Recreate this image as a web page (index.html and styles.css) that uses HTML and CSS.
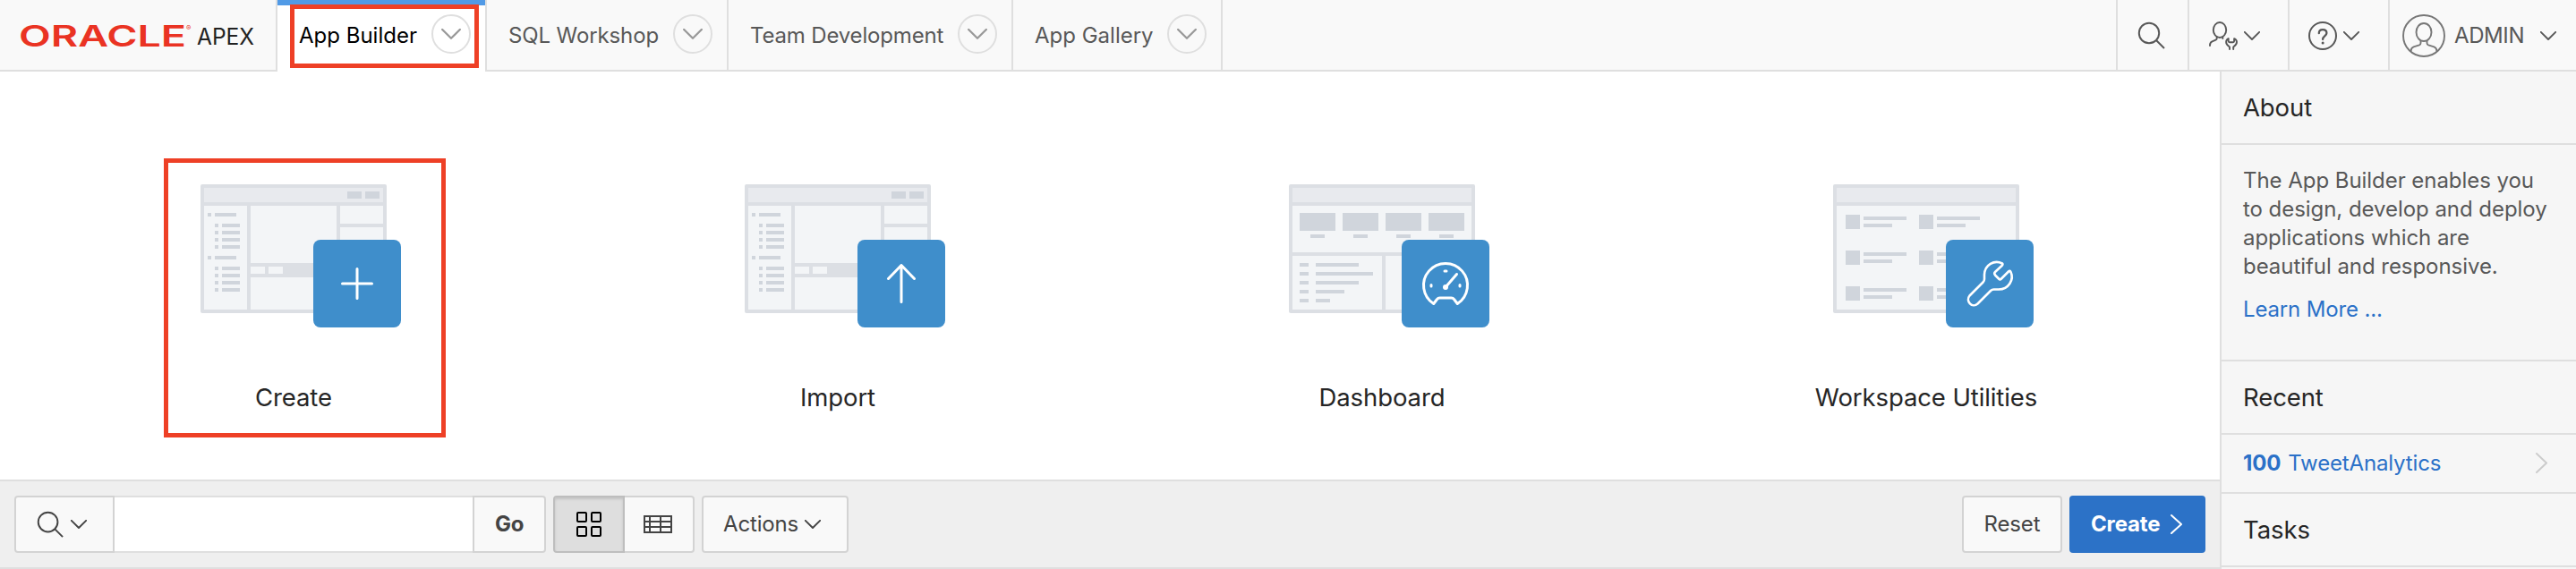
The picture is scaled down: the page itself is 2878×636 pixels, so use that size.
FILE: index.html
```html
<!DOCTYPE html>
<html lang="en">
<head>
<meta charset="utf-8">
<title>Oracle APEX</title>
<link rel="stylesheet" href="styles.css">
</head>
<body>
<svg class="defs" width="0" height="0">
  <symbol id="chev" viewBox="0 0 18 10"><path d="M.8.8 9 9 17.200.8" fill="none" stroke="currentColor" stroke-width="1.9" stroke-linecap="round" stroke-linejoin="round"/></symbol>
  <symbol id="search" viewBox="0 0 32 32"><circle cx="13" cy="13" r="11.200" fill="none" stroke="currentColor" stroke-width="2"/><path d="M21 21l9 9" fill="none" stroke="currentColor" stroke-width="2"/></symbol>
  <symbol id="page" viewBox="0 0 208 144">
    <rect width="208" height="144" rx="2" fill="#dcdfe4"/>
    <path fill="#e8eaee" d="M4 4h200v16H4z"/>
    <path fill="#d0d5dc" d="M164 8h16v8h-16zM184 8h16v8h-16z"/>
    <path fill="#f3f5f7" d="M4 24h48v116H4zM56 24h96v64H56zM156 24h48v20h-48zM156 48h48v92h-48zM56 104h96v36H56zM56 92h16v8H56zM76 92h16v8H76z"/>
    <path fill="#d0d5dc" d="M8 32h4v4H8zM16 32h24v4H16zM16 44h4v4h-4zM24 44h20v4H24zM16 52h4v4h-4zM24 52h20v4H24zM16 60h4v4h-4zM24 60h20v4H24zM16 68h4v4h-4zM24 68h20v4H24zM8 80h4v4H8zM16 80h24v4H16zM16 92h4v4h-4zM24 92h20v4H24zM16 100h4v4h-4zM24 100h20v4H24zM16 108h4v4h-4zM24 108h20v4H24zM16 116h4v4h-4zM24 116h20v4H24z"/>
  </symbol>
</svg>

<header class="header">
  <a class="brand">
    <svg class="logo" width="270" height="40" viewBox="0 0 270 40">
      <text class="oracle" x="-2" y="32" textLength="187" lengthAdjust="spacingAndGlyphs">ORACLE</text>
      <text class="reg" x="185" y="14">®</text>
      <text class="apex" x="197" y="30" textLength="64" lengthAdjust="spacingAndGlyphs">APEX</text>
    </svg>
  </a>
  <nav class="tabs">
    <div class="tab active"><span class="label app">App Builder</span><span class="ring"><svg width="22" height="12"><use href="#chev"/></svg></span><i class="mark mark-tab"></i></div>
    <div class="tab"><span class="label sql">SQL Workshop</span><span class="ring"><svg width="22" height="12"><use href="#chev"/></svg></span></div>
    <div class="tab"><span class="label team">Team Development</span><span class="ring"><svg width="22" height="12"><use href="#chev"/></svg></span></div>
    <div class="tab"><span class="label gallery">App Gallery</span><span class="ring"><svg width="22" height="12"><use href="#chev"/></svg></span></div>
  </nav>
  <div class="tools">
    <div class="tool t-search"><svg width="32" height="32"><use href="#search"/></svg></div>
    <div class="tool t-admin">
      <svg width="32" height="32" viewBox="0 0 32 32" fill="none" stroke="currentColor" stroke-width="1.900" stroke-linecap="round" stroke-linejoin="round"><ellipse cx="12" cy="9.500" rx="7.200" ry="8.500"/><path d="M8.700 17.200v1.800c0 .8-.4 1.300-1.200 1.600l-4 1.700C1.800 23 1 24.500 1 26.500V27M15.300 17.200V19"/><path d="M23 31v-2.500c-2.500-1.500-3.900-3.300-3.900-5.400 0-1.700 1-3.300 2.600-4v3c0 .7.5 1.200 1.200 1.200h4c.7 0 1.200-.5 1.200-1.200v-3c1.600.7 2.900 2.300 2.900 4 0 2.100-1.600 3.900-3.800 5.400V31"/></svg>
      <svg width="18" height="10"><use href="#chev"/></svg>
    </div>
    <div class="tool t-help">
      <svg width="32" height="32" viewBox="0 0 32 32" fill="none" stroke="currentColor" stroke-width="2" stroke-linecap="round"><circle cx="16" cy="16" r="15"/><path d="M11.800 13.200c0-2.500 1.800-4 4.300-4s4.300 1.500 4.300 3.800c0 3.100-4.300 3.200-4.300 7" stroke-width="2.300"/><circle cx="16.100" cy="24" r="1.500" fill="currentColor" stroke="none"/></svg>
      <svg width="18" height="10"><use href="#chev"/></svg>
    </div>
    <div class="tool t-user">
      <svg class="avatar" width="48" height="48" viewBox="0 0 48 48" fill="none" stroke="currentColor" stroke-width="1.900"><circle cx="24" cy="24" r="23"/><ellipse cx="24" cy="20" rx="8.500" ry="10"/><path d="M20.500 29.500V32c0 1.200-.5 2-1.600 2.400l-6.300 2C10.400 37.200 9.500 38.500 9.500 41.500M27.500 29.500V32c0 1.200.5 2 1.600 2.400l6.300 2c2.200.8 3.100 2.100 3.100 5.100"/></svg>
      <span class="label admin">ADMIN</span>
      <svg width="18" height="10"><use href="#chev"/></svg>
    </div>
  </div>
</header>

<div class="body">
  <main class="main">
    <div class="cards">
      <a class="card">
        <span class="art"><svg width="208" height="144"><use href="#page"/></svg>
          <span class="badge"><svg width="98" height="98" viewBox="0 0 98 98"><path d="M49 32.500v33M32.500 49h33"/></svg></span></span>
        <span class="title">Create</span>
        <i class="mark mark-card"></i>
      </a>
      <a class="card">
        <span class="art"><svg width="208" height="144"><use href="#page"/></svg>
          <span class="badge"><svg width="98" height="98" viewBox="0 0 98 98"><path d="M49 69.500v-41M34.500 43.500 49 28.500l14.500 15"/></svg></span></span>
        <span class="title">Import</span>
      </a>
      <a class="card">
        <span class="art"><svg width="208" height="144" viewBox="0 0 208 144">
          <rect width="208" height="144" rx="2" fill="#dcdfe4"/>
          <path fill="#e8eaee" d="M4 4h200v16H4z"/>
          <path fill="#f3f5f7" d="M4 24h200v52H4zM4 80h100v60H4zM108 80h96v60h-96z"/>
          <path fill="#d0d5dc" d="M12 32h40v20H12zM60 32h40v20H60zM108 32h40v20h-40zM156 32h40v20h-40zM24 56h16v4H24zM72 56h16v4H72zM120 56h16v4h-16zM168 56h16v4h-16zM12 88h10v4H12zM12 98h10v4H12zM12 108h10v4H12zM12 118h10v4H12zM12 128h10v4H12zM30 88h48v4H30zM30 98h64v4H30zM30 108h48v4H30zM30 118h32v4H30zM30 128h16v4H30z"/></svg>
          <span class="badge"><svg width="98" height="98" viewBox="0 0 98 98"><path d="M35.700 71.500A24.500 24.500 0 1 1 62.300 71.500L58.500 66.500Q57.500 65 55.500 65h-13Q40.500 65 39.500 66.500ZM49 53 61.500 38.500"/><circle cx="49" cy="53" r="3" class="solid"/><path d="M48 35h2M33 50.500v1.500M65 50.500v1.500"/></svg></span></span>
        <span class="title">Dashboard</span>
      </a>
      <a class="card">
        <span class="art"><svg width="208" height="144" viewBox="0 0 208 144">
          <rect width="208" height="144" rx="2" fill="#dcdfe4"/>
          <path fill="#e8eaee" d="M4 4h200v16H4z"/>
          <path fill="#f3f5f7" d="M4 24h200v116H4z"/>
          <path fill="#d0d5dc" d="M14 34h16v16H14zM34 36h48v4H34zM34 44h32v4H34zM14 74h16v16H14zM34 76h48v4H34zM34 84h32v4H34zM14 114h16v16H14zM34 116h48v4H34zM34 124h32v4H34zM96 34h16v16H96zM116 36h48v4h-48zM116 44h32v4h-32zM96 74h16v16H96zM116 76h48v4h-48zM116 84h32v4h-32zM96 114h16v16H96zM116 116h48v4h-48zM116 124h32v4h-32z"/></svg>
          <span class="badge"><svg width="98" height="98" viewBox="0 0 98 98"><path d="M63 26.500C54 22 43.500 28 43 39v5Q43 46 41.500 47.500L26.500 62.500C21.500 68.500 29.500 77 35.500 71.500L50 57Q51.500 55.500 53.500 55.500H59C70 55.500 76.500 44.500 72.500 36Q71.500 34 70 35.500L62 43.500Q60.500 45 59 43.500L55 39.500Q53.500 37.500 55 36L62.500 29Q64 27.500 63 26.500Z" stroke-width="2.600"/></svg></span></span>
        <span class="title">Workspace Utilities</span>
      </a>
    </div>

    <div class="toolbar">
      <div class="group">
        <button class="btn b-search"><svg width="31" height="31"><use href="#search"/></svg><svg width="18" height="10"><use href="#chev"/></svg></button>
        <input class="field" type="text" aria-label="Search">
        <button class="btn b-go">Go</button>
      </div>
      <div class="group">
        <button class="btn b-grid"><svg width="28" height="28" viewBox="0 0 28 28" fill="none" stroke="currentColor" stroke-width="2"><rect x="1" y="1" width="10" height="10" rx="1"/><rect x="17" y="1" width="10" height="10" rx="1"/><rect x="1" y="17" width="10" height="10" rx="1"/><rect x="17" y="17" width="10" height="10" rx="1"/></svg></button>
        <button class="btn b-table"><svg width="32" height="20" viewBox="0 0 32 20" fill="none" stroke="currentColor" stroke-width="2"><path d="M1 1h30v18H1zM1 7h30M1 13h30M7 1v18M19 1v18"/></svg></button>
      </div>
      <button class="btn b-actions">Actions<svg width="18" height="10"><use href="#chev"/></svg></button>
      <span class="spacer"></span>
      <button class="btn b-reset">Reset</button>
      <button class="btn b-create">Create<svg width="13" height="22" viewBox="0 0 13 22"><path d="M1 1l11 10L1 21" fill="none" stroke="currentColor" stroke-width="2" stroke-linecap="round" stroke-linejoin="round"/></svg></button>
    </div>
  </main>

  <aside class="side">
    <h2>About</h2>
    <div class="about">
      <p>The App Builder enables you<br>to design, develop and deploy<br>applications which are<br>beautiful and responsive.</p>
      <a class="more">Learn More ...</a>
    </div>
    <h2>Recent</h2>
    <a class="recent"><b>100</b> <span>TweetAnalytics</span><svg width="13" height="23" viewBox="0 0 13 23"><path d="M1 1l11 10.500L1 22" fill="none" stroke="#ccc" stroke-width="2" stroke-linecap="round"/></svg></a>
    <h2>Tasks</h2>
  </aside>
</div>
</body>
</html>
```

FILE: styles.css
```css
* { box-sizing: border-box; }
body { margin: 0; width: 2878px; height: 636px; overflow: hidden; background: #fff; font-family: Inter, "Liberation Sans", sans-serif; font-size: 24px; color: #585858; }
svg { display: block; flex: none; }
.defs { position: absolute; }

.header { display: flex; height: 80px; background: #f9f9f9; border-bottom: 2px solid #dfdfdf; }
.brand { width: 308px; padding: 20px 0 0 23px; }
.logo { overflow: visible; }
.oracle { font: 600 33px Inter, sans-serif; fill: #ea3323; }
.reg { font: 8px Inter, sans-serif; fill: #ea3323; }
.apex { font: 400 25px Inter, sans-serif; fill: #222; }

.tabs { display: flex; height: 80px; }
.tab { position: relative; display: flex; height: 78px; border-right: 2px solid #dfdfdf; padding: 0 16px 0 24px; gap: 16px; }
.tab:first-child { border-left: 2px solid #dfdfdf; }
.label { line-height: 80px; white-space: nowrap; }
.tab.active { height: 80px; background: #fff; color: #000; box-shadow: inset 0 6px #519ae6; }
.app, .gallery { width: 132px; }
.sql { width: 168px; letter-spacing: -.12px; }
.team { width: 216px; letter-spacing: -.17px; }
.ring { display: grid; place-items: center; width: 44px; height: 44px; margin-top: 16px; border: 2px solid #dfdfdf; border-radius: 50%; color: #999; }
.mark { position: absolute; border: 5px solid #ee4026; pointer-events: none; }
.mark-tab { left: 14px; top: 5px; width: 211px; height: 71px; }

.tools { display: flex; margin-left: auto; }
.tool { display: flex; align-items: center; height: 78px; border-left: 2px solid #dfdfdf; padding-top: 2px; }
.t-search { width: 80px; padding-left: 22px; }
.t-admin { width: 112px; padding-left: 22px; gap: 7px; }
.t-help { width: 112px; padding-left: 21px; gap: 7px; }
.t-user { width: 210px; padding-left: 14px; }
.avatar { color: #777; }
.admin { width: 78px; margin: -1px 18px 0 10px; letter-spacing: -.4px; }

.body { display: flex; height: 556px; }
.main { width: 2480px; display: flex; flex-direction: column; }
.cards { display: flex; height: 456px; padding: 0 24px; }
.card { position: relative; width: 608px; display: flex; flex-direction: column; align-items: center; padding-top: 126px; }
.art { position: relative; width: 208px; height: 160px; }
.badge { position: absolute; left: 126px; top: 62px; width: 98px; height: 98px; border-radius: 8px; background: #3f8ecb; }
.badge svg { fill: none; stroke: #fff; stroke-width: 3; stroke-linecap: round; stroke-linejoin: round; }
.badge .solid { fill: #fff; stroke: none; }
.title { margin-top: 58px; line-height: 40px; font-size: 27.5px; letter-spacing: -.1px; color: #262626; white-space: nowrap; }
.mark-card { left: 159px; top: 97px; width: 315px; height: 312px; }

.toolbar { display: flex; align-items: center; gap: 8px; height: 100px; padding: 0 16px; background: #efefef; border-top: 2px solid #dfdfdf; border-bottom: 2px solid #dfdfdf; }
.group { display: flex; }
.btn { display: flex; align-items: center; justify-content: center; height: 64px; margin: 0; padding: 0 0 1px; border: 2px solid #d3d3d3; border-radius: 4px; background: #f9f9f9; color: #444; font: 24px Inter, "Liberation Sans", sans-serif; letter-spacing: -.15px; }
.b-search { width: 112px; justify-content: flex-start; padding: 0 0 0 23px; gap: 7px; border-radius: 4px 0 0 4px; }
.field { width: 400px; height: 64px; border: solid #dfdfdf; border-width: 2px 0; background: #fff; outline: 0; }
.b-go { width: 82px; border-radius: 0 4px 4px 0; font-weight: 700; letter-spacing: -.4px; }
.b-grid { width: 80px; padding: 0; border-color: #bebebe; border-radius: 4px 0 0 4px; background: #dedede; color: #000; box-shadow: inset 0 2px 3px rgba(0, 0, 0, .12); }
.b-table { width: 78px; padding: 0 2px 0 0; border-left: 0; border-radius: 0 4px 4px 0; }
.b-actions { width: 164px; justify-content: flex-start; padding-left: 22px; gap: 7px; }
.spacer { flex: 1; }
.b-reset { width: 112px; }
.b-create { width: 152px; justify-content: flex-start; padding-left: 22px; gap: 12px; border-color: #2c72c7; background: #2c72c7; color: #fff; font-weight: 700; }

.side { width: 398px; border-left: 2px solid #dfdfdf; background: #f6f6f6; }
.side h2 { height: 82px; margin: 0; padding-left: 24px; border-bottom: 2px solid #dfdfdf; font-size: 27.5px; font-weight: 400; letter-spacing: -.1px; line-height: 80px; color: #262626; }
.about { height: 242px; padding: 24px 0 0 24px; border-bottom: 2px solid #dfdfdf; line-height: 32px; letter-spacing: -.05px; }
.about p { margin: 0 0 16px; white-space: nowrap; }
.more, .recent { color: #2b71c8; letter-spacing: -.15px; }
.recent { display: flex; align-items: center; gap: 8px; height: 66px; padding: 0 32px 1px 24px; border-bottom: 2px solid #dfdfdf; }
.recent svg { margin-left: auto; }
```
